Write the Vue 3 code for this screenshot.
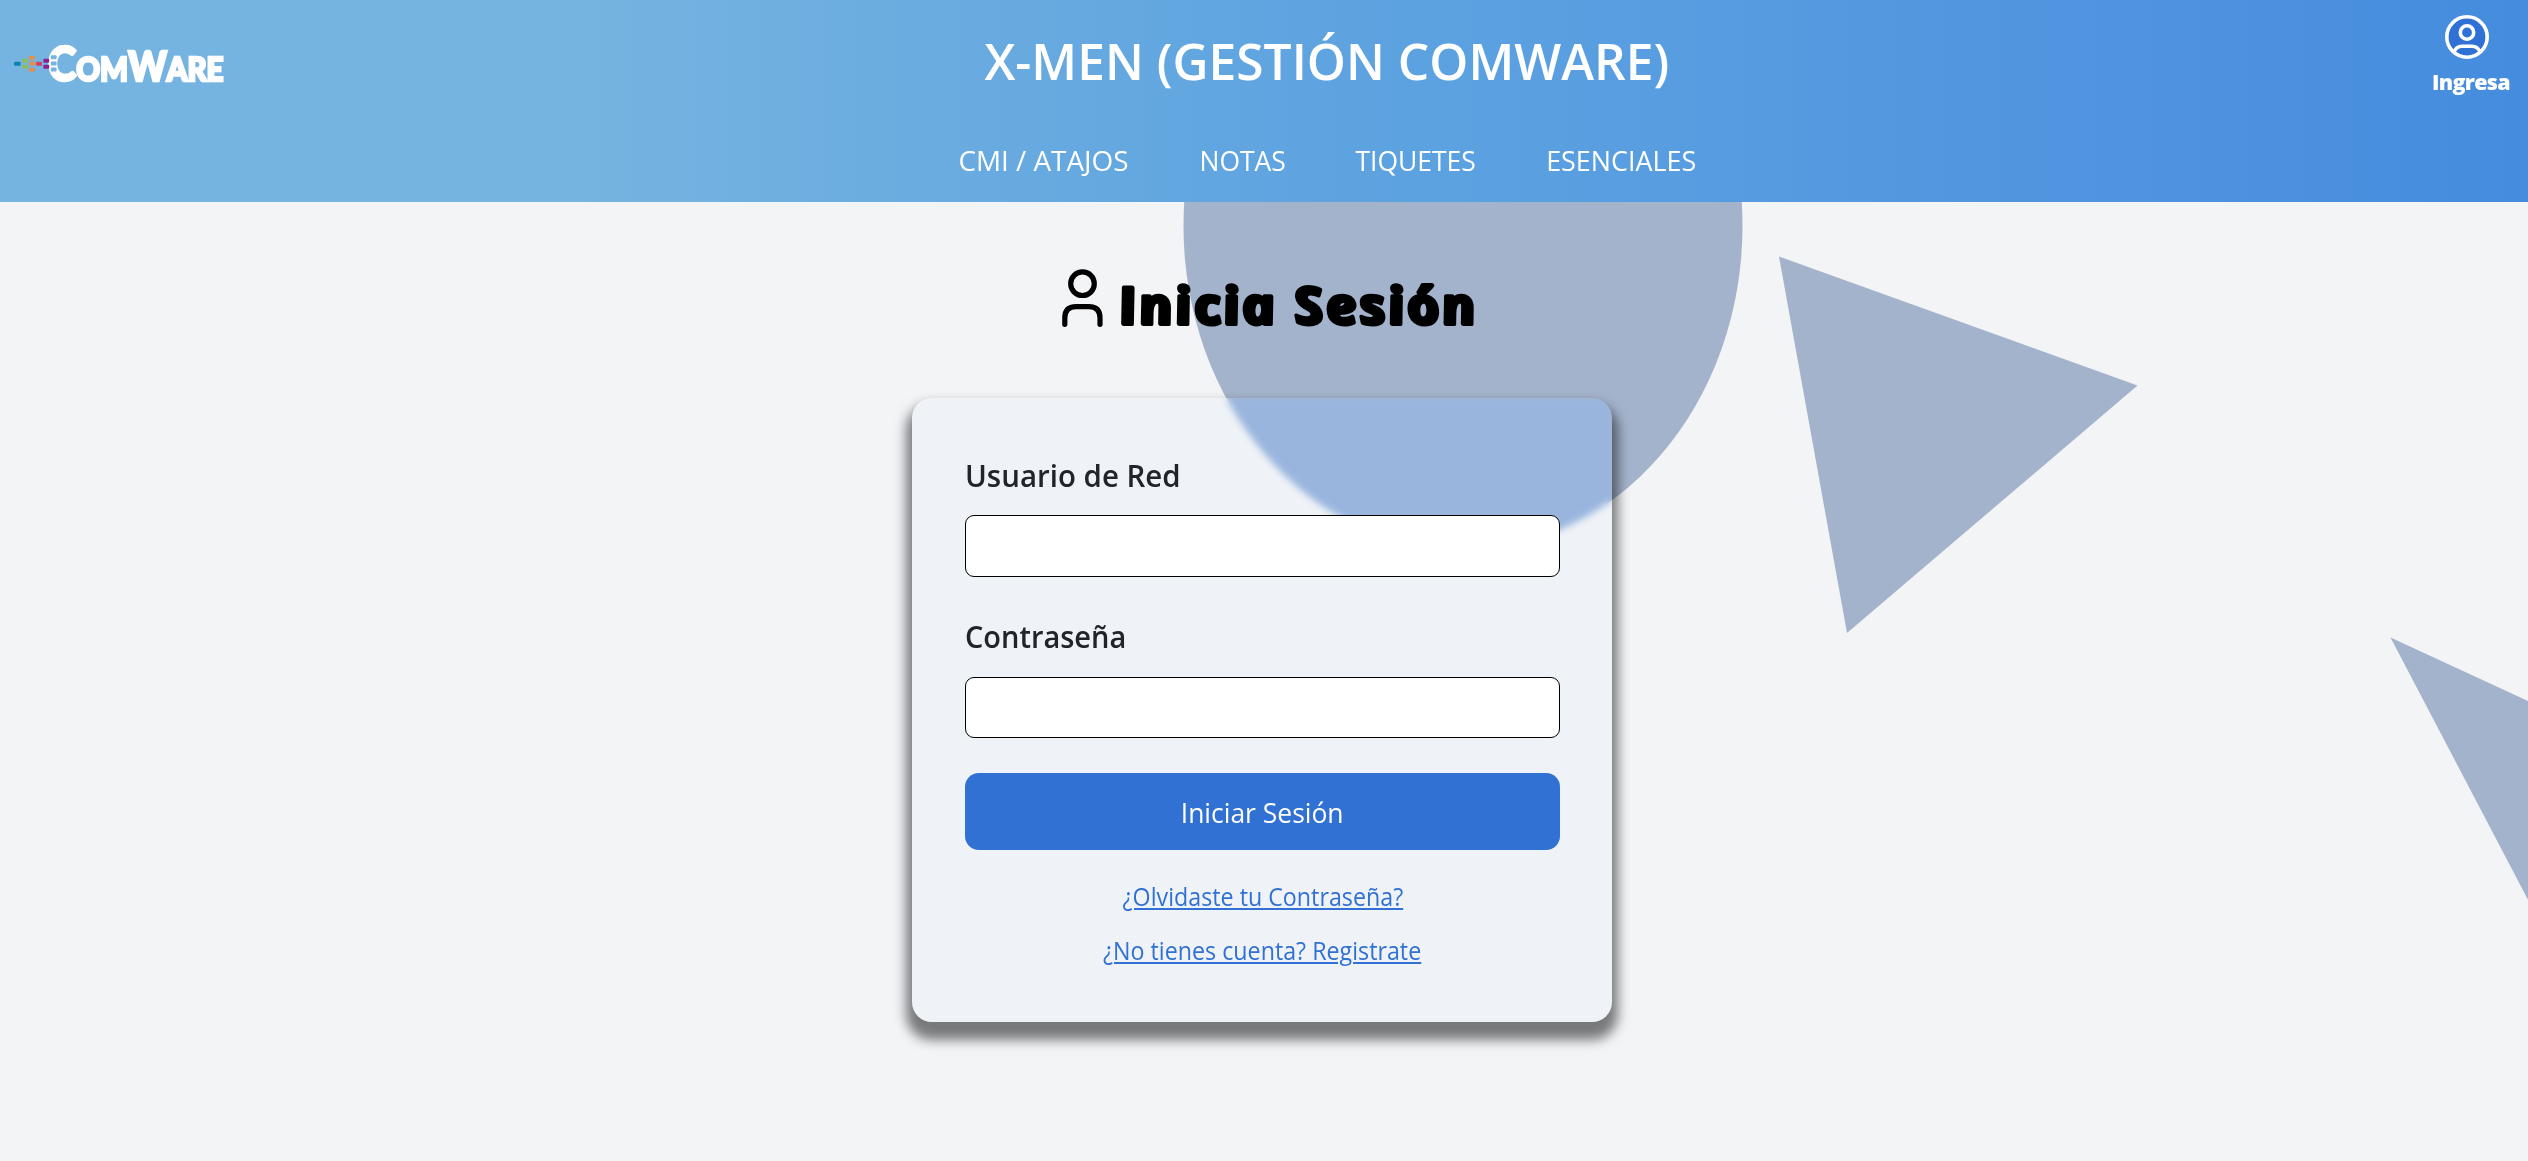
<script setup>
import { ref } from 'vue'

const menu = [
  { label: 'CMI / ATAJOS', width: 169, stretch: 0.995 },
  { label: 'NOTAS', width: 85, stretch: 0.945 },
  { label: 'TIQUETES', width: 119, stretch: 0.945 },
  { label: 'ESENCIALES', width: 149, stretch: 0.96 },
]

const user = ref('')
const password = ref('')

const dots = [
  { x: 14, y: 61.7, w: 6.6, c: '#0d82b5' },
  { x: 22, y: 58.7, w: 5.6, c: '#8cbf5c' },
  { x: 22, y: 64.8, w: 6, c: '#8cbf5c' },
  { x: 29, y: 55.8, w: 5.6, c: '#e58f4b' },
  { x: 29.4, y: 61.5, w: 6, c: '#e58f4b' },
  { x: 29, y: 67.8, w: 5.6, c: '#e58f4b' },
  { x: 36.2, y: 61.7, w: 5.8, c: '#cf3f68' },
  { x: 43.4, y: 58.7, w: 5.8, c: '#8c1f8c' },
  { x: 43.4, y: 64.8, w: 5.8, c: '#8c1f8c' },
  { x: 50.8, y: 55.2, w: 5.8, c: '#75b2df' },
  { x: 50.8, y: 61.4, w: 5.8, c: '#75b2df' },
  { x: 50.8, y: 67.4, w: 5.8, c: '#75b2df' },
]
</script>

<template>
  <div class="page">
    <header class="header">
      <svg class="logo" width="226" height="110" viewBox="0 0 226 110">
        <text class="logo-text" x="48" y="80.700" textLength="175.500" lengthAdjust="spacingAndGlyphs"><tspan font-size="48">C</tspan><tspan font-size="33">OM</tspan><tspan font-size="41">W</tspan><tspan font-size="33">ARE</tspan></text>
        <rect v-for="(d, i) in dots" :key="i" :x="d.x" :y="d.y" :width="d.w" height="4" rx="1" :fill="d.c" />
      </svg>
      <div class="center">
        <h1 class="brand"><span>X-MEN (GESTIÓN COMWARE)</span></h1>
        <nav class="menu">
          <a v-for="m in menu" :key="m.label" class="item" :style="{ width: m.width + 'px' }"><span :style="{ transform: `scaleX(${m.stretch})` }">{{ m.label }}</span></a>
        </nav>
      </div>
      <div class="account">
        <svg class="avatar" width="46" height="46" viewBox="0 0 46 46" fill="none" stroke="#fff" stroke-width="3.6">
          <circle cx="23" cy="23" r="20.2" fill="#3071d6" />
          <circle cx="23" cy="18.500" r="6.700" />
          <path d="M10 38 C11.500 34 14 32.200 18 32.200 H28 C32 32.200 34.500 34 36 38" />
        </svg>
        <span class="account-label">Ingresa</span>
      </div>
    </header>

    <main class="main">
      <svg class="shapes" width="2528" height="959" viewBox="0 202 2528 959" fill="#a3b3cb">
        <ellipse cx="1463" cy="226" rx="279.500" ry="324" />
        <polygon points="1779,256.500 2137.500,385.500 1847,633" />
        <polygon points="2390.500,637.500 2700,780.500 2666,1163" />
      </svg>

      <svg class="heading" width="424" height="90" viewBox="1057 255 424 90">
        <g fill="none" stroke="#000" stroke-width="5.200" stroke-linecap="round">
          <circle cx="1082.500" cy="283.700" r="11.800" />
          <path d="M1064.800 324.300 V318 Q1064.800 306.600 1076 306.600 H1089 Q1100 306.600 1100 318 V324.300" />
        </g>
        <g transform="translate(1120 324) skewX(12) scale(1.09 1)">
          <text class="heading-text" x="1.800" y="0" textLength="327">Inicia Sesión</text>
        </g>
      </svg>

      <form class="card" @submit.prevent>
        <label class="label" for="user"><span>Usuario de Red</span></label>
        <input id="user" v-model="user" class="input" type="text" />
        <label class="label second" for="pass"><span>Contraseña</span></label>
        <input id="pass" v-model="password" class="input short" type="password" />
        <button class="submit" type="submit"><span>Iniciar Sesión</span></button>
        <div class="links">
          <a class="link">¿Olvidaste tu Contraseña?</a>
          <a class="link">¿No tienes cuenta? Registrate</a>
        </div>
      </form>
    </main>
  </div>
</template>

<style>
body {
  margin: 0;
  background: #f2f4f6;
}
</style>

<style scoped>
.page {
  width: 2528px;
  height: 1161px;
  overflow: hidden;
  font-family: "Open Sans", "Noto Sans", sans-serif;
  background: #f2f4f6;
}
.header {
  display: grid;
  grid-template-columns: 226px 1fr 100px;
  height: 202px;
  background: linear-gradient(90deg, #75b3e0 0%, #75b3e0 23%, #60a5e0 50%, #549ae0 72%, #468cde 100%);
  color: #fff;
}
.logo {
  overflow: visible;
}
.logo-text {
  font-family: Lato, sans-serif;
  font-weight: 900;
  fill: #fff;
  stroke: #fff;
  stroke-width: 2.6;
}
.center {
  display: flex;
  flex-direction: column;
  align-items: center;
}
.brand {
  margin: 0;
  font-size: 51.500px;
  font-weight: 600;
  line-height: 120px;
  white-space: nowrap;
}
.brand span,
.item span,
.submit span,
.label span,
.link {
  display: inline-block;
  white-space: nowrap;
}
.brand span {
  transform: scaleX(0.965);
}
.menu {
  display: flex;
  gap: 71.500px;
  margin-left: 1px;
}
.item {
  display: flex;
  justify-content: center;
  font-size: 28px;
  line-height: 80px;
}
.account {
  display: flex;
  flex-direction: column;
  align-items: flex-start;
}
.avatar {
  margin: 14px 0 0 16px;
}
.account-label {
  padding-left: 4px;
  font-size: 21.500px;
  font-weight: 800;
  line-height: 44px;
  letter-spacing: -0.700px;
}
.main {
  position: relative;
  display: flex;
  flex-direction: column;
  align-items: center;
  height: 959px;
}
.shapes {
  position: absolute;
  inset: 0;
}
.heading {
  position: relative;
  overflow: visible;
  margin: 53px 0 53px 10px;
}
.heading-text {
  font-size: 51px;
  font-style: italic;
  font-weight: 700;
  stroke: #000;
  stroke-width: 4;
  stroke-linejoin: round;
}
.card {
  position: relative;
  box-sizing: border-box;
  display: flex;
  flex-direction: column;
  width: 700px;
  height: 624px;
  margin-right: 4px;
  padding: 37px 52px 0 53px;
  border-radius: 20px;
  background: rgba(190, 235, 220, 0.035);
  backdrop-filter: blur(3.500px) saturate(175%);
  box-shadow: 0 12px 12px 6px rgba(0, 0, 0, 0.5);
}
.label {
  font-size: 31.500px;
  font-weight: 600;
  line-height: 80px;
  color: #212529;
}
.label span {
  transform: scaleX(0.935);
  transform-origin: left;
}
.second {
  margin-top: 18px;
  line-height: 82px;
}
.second span {
  transform: scaleX(0.92);
}
.input {
  box-sizing: border-box;
  height: 62px;
  padding: 0 16px;
  border: 1px solid #000;
  border-radius: 9px;
  background: #fff;
  font: inherit;
  font-size: 28px;
  outline: none;
}
.short {
  height: 61px;
}
.submit {
  height: 77px;
  margin-top: 35px;
  padding: 0;
  border: 0;
  border-radius: 14px;
  background: #3071d3;
  color: #fff;
  font-family: inherit;
  font-size: 28px;
}
.submit span {
  transform: scaleX(0.945);
}
.links {
  display: flex;
  flex-direction: column;
  align-items: center;
  margin-top: 19px;
}
.link {
  font-size: 25px;
  line-height: 54px;
  color: #3071d3;
  text-decoration: underline 2px;
  text-underline-offset: 2px;
  transform: scaleX(0.93);
}
</style>
